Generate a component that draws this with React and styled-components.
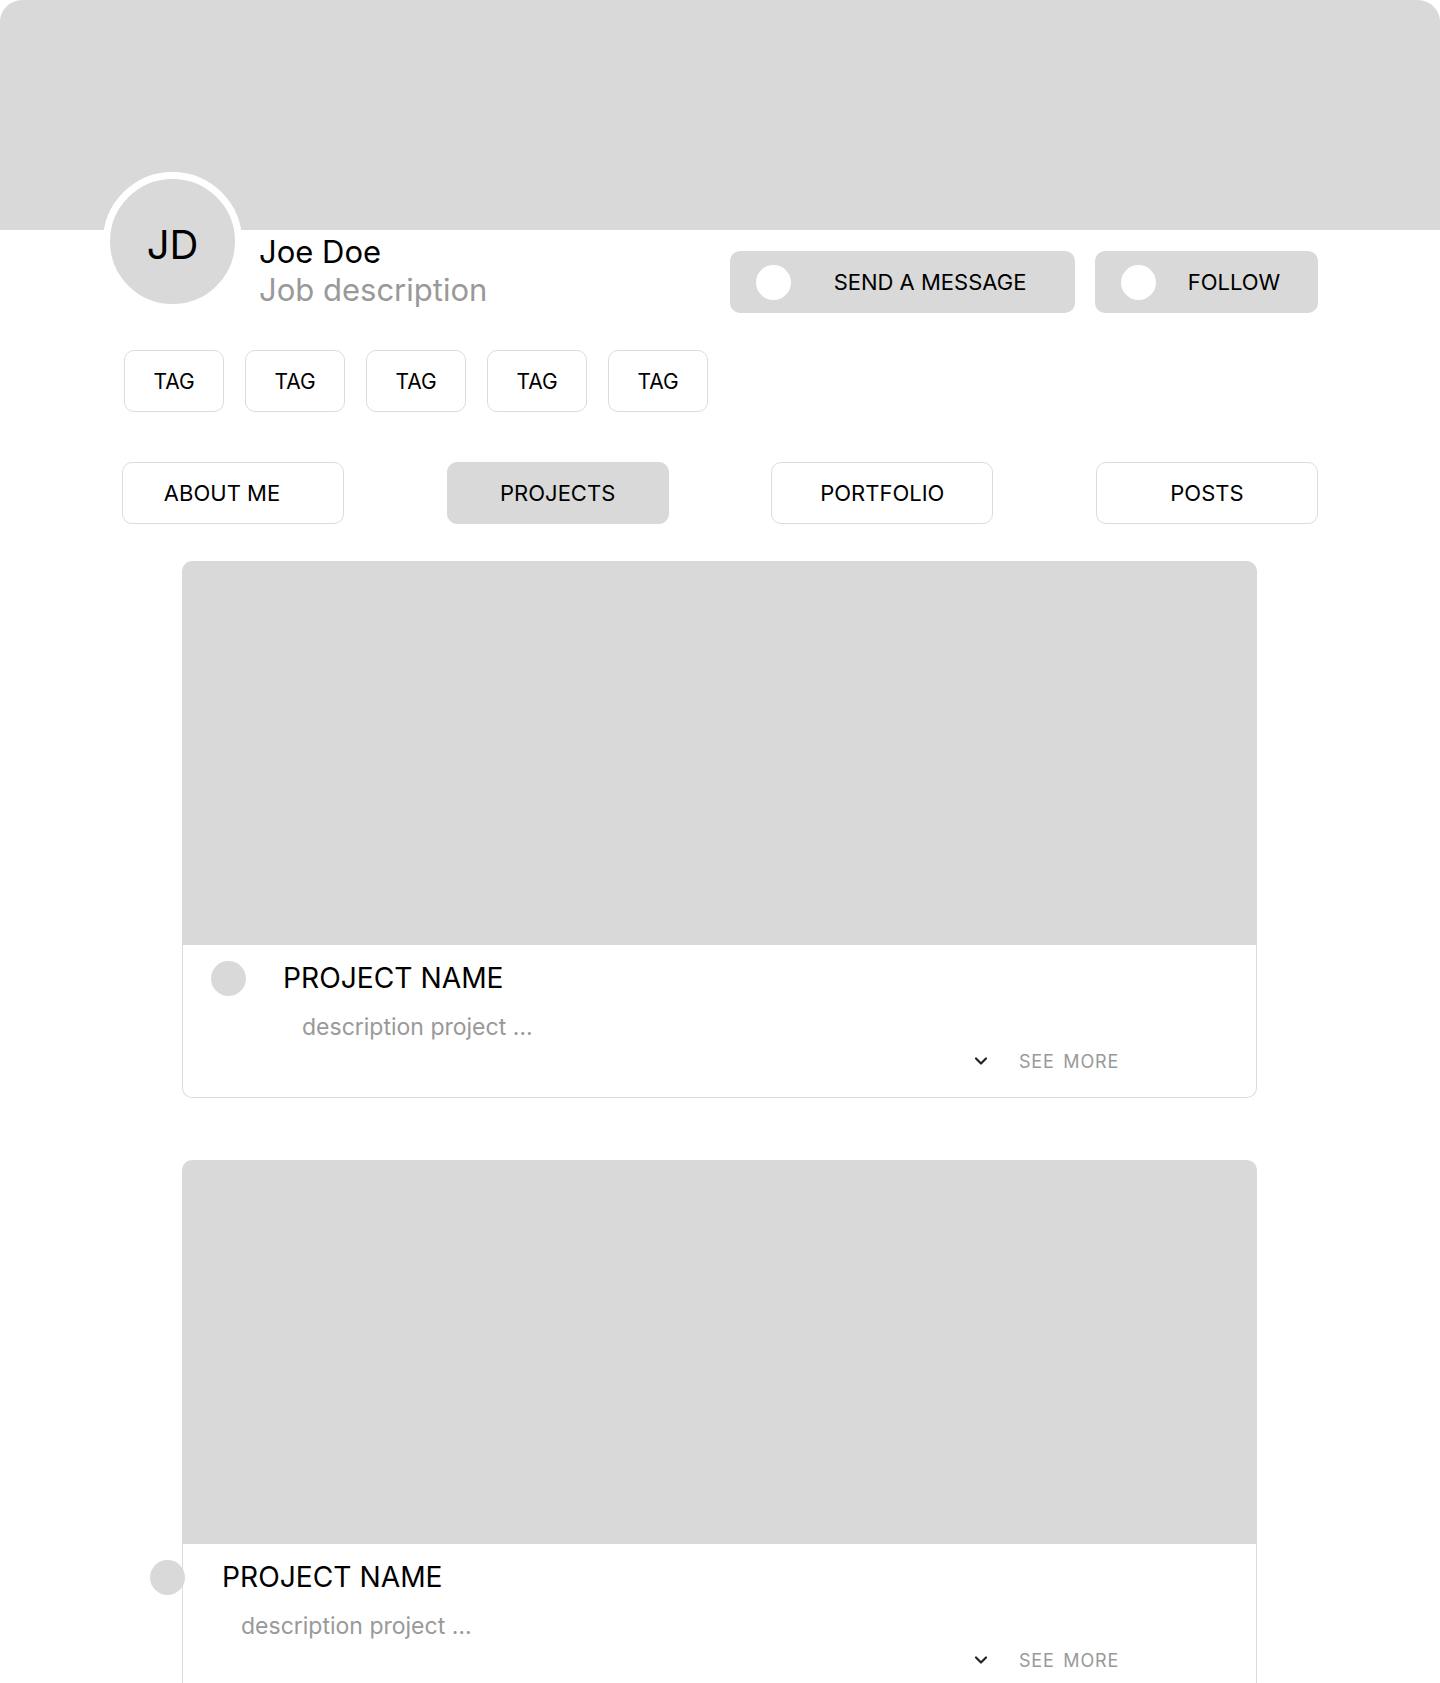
import React from "react"
import styled, { createGlobalStyle } from "styled-components"
import { ChevronDown } from "lucide-react"

const GlobalStyle = createGlobalStyle`
    * {
        box-sizing: border-box;
    }

    body {
        margin: 0;
        background: #fff;
        font-family: Inter, "Noto Sans", sans-serif;
        color: #000;
    }
`

const Page = styled.div`
    width: 1440px;
    height: 1683px;
    overflow: hidden;
    border-radius: 22px;
    background: #fff;
`

const Banner = styled.div`
    height: 230px;
    background: #d9d9d9;
`

const Header = styled.header`
    display: flex;
    align-items: flex-start;
    margin-top: -58px;
    padding-left: 103px;
`

const Avatar = styled.div`
    width: 139px;
    height: 139px;
    border: 7px solid #fff;
    border-radius: 50%;
    background: #d9d9d9;
    display: flex;
    align-items: center;
    justify-content: center;
    font-size: 40px;
    padding-top: 6px;
`

const Identity = styled.div`
    margin-left: 17px;
    padding-top: 61px;
    font-size: 31px;
    line-height: 38px;

    .name {
        color: #000;
    }

    .job {
        color: #999;
    }
`

const Actions = styled.div`
    display: flex;
    gap: 20px;
    margin-left: auto;
    margin-right: 122px;
    margin-top: 79px;
`

const ActionButton = styled.button`
    display: flex;
    align-items: center;
    width: ${(p) => p.$width}px;
    height: 62px;
    padding: 0 0 0 26px;
    border: none;
    border-radius: 10px;
    background: #d9d9d9;
    font-family: inherit;
    font-size: 22px;
    color: #000;

    .dot {
        width: 35px;
        height: 35px;
        border-radius: 50%;
        background: #fff;
        flex-shrink: 0;
    }

    .label {
        flex: 1;
        text-align: center;
        padding-right: 6px;
    }
`

const TagRow = styled.div`
    display: flex;
    gap: 21px;
    margin-top: 37px;
    padding-left: 124px;
`

const Tag = styled.div`
    width: 100px;
    height: 62px;
    border: 1px solid #dcdcdc;
    border-radius: 10px;
    display: flex;
    align-items: center;
    justify-content: center;
    font-size: 21px;
`

const Tabs = styled.nav`
    display: flex;
    justify-content: space-between;
    margin-top: 50px;
    padding: 0 122px;
`

const Tab = styled.button`
    width: 222px;
    height: 62px;
    padding: 0 ${(p) => p.$nudge || 0}px 0 0;
    border: 1px solid ${(p) => (p.$active ? "#d9d9d9" : "#dcdcdc")};
    border-radius: 10px;
    background: ${(p) => (p.$active ? "#d9d9d9" : "#fff")};
    font-family: inherit;
    font-size: 22px;
    color: #000;
`

const Feed = styled.section`
    display: flex;
    flex-direction: column;
    gap: 62px;
    margin-top: 37px;
    padding-left: 182px;
`

const Card = styled.article`
    width: 1075px;

    .cover {
        height: 384px;
        background: #d9d9d9;
        border-radius: 10px 10px 0 0;
    }

    .body {
        height: 153px;
        padding-top: 16px;
        border: 1px solid #dcdcdc;
        border-top: none;
        border-radius: 0 0 10px 10px;
    }
`

const TitleBlock = styled.div`
    display: flex;
    align-items: flex-start;
    gap: 37px;
    margin-left: ${(p) => p.$offset}px;

    .dot {
        width: 35px;
        height: 35px;
        border-radius: 50%;
        background: #d9d9d9;
        flex-shrink: 0;
    }

    h3 {
        margin: 0;
        font-size: 28.2px;
        font-weight: 400;
        line-height: 35px;
    }

    p {
        margin: 16px 0 0 19px;
        font-size: 23px;
        line-height: 30px;
        color: #999;
    }
`

const SeeMore = styled.div`
    display: flex;
    align-items: center;
    justify-content: flex-end;
    gap: 28px;
    margin-top: 7px;
    padding-right: 137px;
    height: 24px;

    svg {
        color: #222;
    }

    span {
        font-size: 18px;
        letter-spacing: 0.8px;
        word-spacing: 3px;
        color: #999;
    }
`

const tags = ["TAG", "TAG", "TAG", "TAG", "TAG"]
const tabs = [
    { label: "ABOUT ME", nudge: 22 },
    { label: "PROJECTS", active: true },
    { label: "PORTFOLIO" },
    { label: "POSTS" },
]
const projects = [
    { id: 1, offset: 28 },
    { id: 2, offset: -33 },
]

function ProjectCard({ offset }) {
    return (
        <Card>
            <div className="cover" />
            <div className="body">
                <TitleBlock $offset={offset}>
                    <div className="dot" />
                    <div>
                        <h3>PROJECT NAME</h3>
                        <p>description project …</p>
                    </div>
                </TitleBlock>
                <SeeMore>
                    <ChevronDown size={20} strokeWidth={2.6} />
                    <span>SEE MORE</span>
                </SeeMore>
            </div>
        </Card>
    )
}

export default function App() {
    return (
        <>
            <GlobalStyle />
            <Page>
                <Banner />
                <Header>
                    <Avatar>JD</Avatar>
                    <Identity>
                        <div className="name">Joe Doe</div>
                        <div className="job">Job description</div>
                    </Identity>
                    <Actions>
                        <ActionButton $width={345}>
                            <span className="dot" />
                            <span className="label">SEND A MESSAGE</span>
                        </ActionButton>
                        <ActionButton $width={223}>
                            <span className="dot" />
                            <span className="label">FOLLOW</span>
                        </ActionButton>
                    </Actions>
                </Header>
                <TagRow>
                    {tags.map((t, i) => (
                        <Tag key={i}>{t}</Tag>
                    ))}
                </TagRow>
                <Tabs>
                    {tabs.map((t) => (
                        <Tab key={t.label} $active={t.active} $nudge={t.nudge}>
                            {t.label}
                        </Tab>
                    ))}
                </Tabs>
                <Feed>
                    {projects.map((p) => (
                        <ProjectCard key={p.id} offset={p.offset} />
                    ))}
                </Feed>
            </Page>
        </>
    )
}
